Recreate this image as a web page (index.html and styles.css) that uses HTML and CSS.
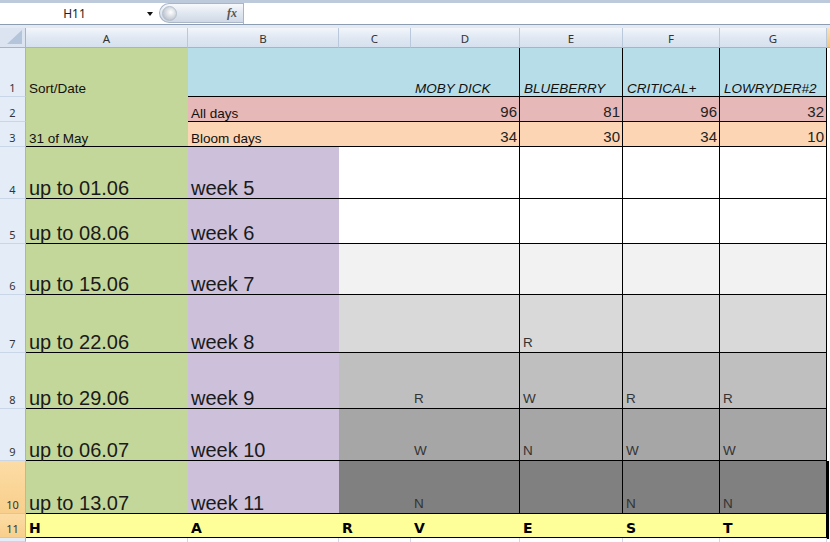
FILE: index.html
```html
<!DOCTYPE html>
<html>
<head>
<meta charset="utf-8">
<title>Harvest</title>
<link rel="stylesheet" href="styles.css">
</head>
<body>
<div class="fbar">
	<div class="namebox"><span class="ref">H11</span><i class="drop"></i></div>
	<div class="fxbox"><span class="knob"></span><em>fx</em></div>
	<div class="formula"></div>
</div>

<div class="sheet">
	<!-- column headers -->
	<div class="corner"></div>
	<div class="hd">A</div>
	<div class="hd">B</div>
	<div class="hd">C</div>
	<div class="hd">D</div>
	<div class="hd">E</div>
	<div class="hd">F</div>
	<div class="hd">G</div>
	<div class="hd sel"></div>

	<!-- 1 -->
	<div class="rh">1</div>
	<div class="c green pb2">Sort/Date</div>
	<div class="c blue bb"></div>
	<div class="c blue bb"></div>
	<div class="c blue bb br it">MOBY DICK</div>
	<div class="c blue bb br it">BLUEBERRY</div>
	<div class="c blue bb br it">CRITICAL+</div>
	<div class="c blue bb br it">LOWRYDER#2</div>
	<div class="c"></div>

	<!-- 2 -->
	<div class="rh">2</div>
	<div class="c green"></div>
	<div class="c pink bb">All days</div>
	<div class="c pink bb"></div>
	<div class="c pink bb br num">96</div>
	<div class="c pink bb br num">81</div>
	<div class="c pink bb br num">96</div>
	<div class="c pink bb br num">32</div>
	<div class="c"></div>

	<!-- 3 -->
	<div class="rh">3</div>
	<div class="c green bb">31 of May</div>
	<div class="c peach bb">Bloom days</div>
	<div class="c peach bb"></div>
	<div class="c peach bb br num">34</div>
	<div class="c peach bb br num">30</div>
	<div class="c peach bb br num">34</div>
	<div class="c peach bb br num">10</div>
	<div class="c"></div>

	<!-- 4 -->
	<div class="rh">4</div>
	<div class="c green bb big">up to 01.06</div>
	<div class="c purple bb big">week 5</div>
	<div class="c g0 bb"></div>
	<div class="c g0 bb br"></div>
	<div class="c g0 bb br"></div>
	<div class="c g0 bb br"></div>
	<div class="c g0 bb br"></div>
	<div class="c"></div>

	<!-- 5 -->
	<div class="rh">5</div>
	<div class="c green bb big">up to 08.06</div>
	<div class="c purple bb big">week 6</div>
	<div class="c g0 bb"></div>
	<div class="c g0 bb br"></div>
	<div class="c g0 bb br"></div>
	<div class="c g0 bb br"></div>
	<div class="c g0 bb br"></div>
	<div class="c"></div>

	<!-- 6 -->
	<div class="rh">6</div>
	<div class="c green bb big">up to 15.06</div>
	<div class="c purple bb big">week 7</div>
	<div class="c g1 bb"></div>
	<div class="c g1 bb br"></div>
	<div class="c g1 bb br"></div>
	<div class="c g1 bb br"></div>
	<div class="c g1 bb br"></div>
	<div class="c"></div>

	<!-- 7 -->
	<div class="rh">7</div>
	<div class="c green bb big">up to 22.06</div>
	<div class="c purple bb big">week 8</div>
	<div class="c g2 bb"></div>
	<div class="c g2 bb br"></div>
	<div class="c g2 bb br mk">R</div>
	<div class="c g2 bb br"></div>
	<div class="c g2 bb br"></div>
	<div class="c"></div>

	<!-- 8 -->
	<div class="rh">8</div>
	<div class="c green bb big">up to 29.06</div>
	<div class="c purple bb big">week 9</div>
	<div class="c g3 bb"></div>
	<div class="c g3 bb br mk">R</div>
	<div class="c g3 bb br mk">W</div>
	<div class="c g3 bb br mk">R</div>
	<div class="c g3 bb br mk">R</div>
	<div class="c"></div>

	<!-- 9 -->
	<div class="rh">9</div>
	<div class="c green bb big">up to 06.07</div>
	<div class="c purple bb big">week 10</div>
	<div class="c g4 bb"></div>
	<div class="c g4 bb br mk">W</div>
	<div class="c g4 bb br mk">N</div>
	<div class="c g4 bb br mk">W</div>
	<div class="c g4 bb br mk">W</div>
	<div class="c"></div>

	<!-- 10 -->
	<div class="rh on">10</div>
	<div class="c green bb big">up to 13.07</div>
	<div class="c purple bb big">week 11</div>
	<div class="c g5 bb"></div>
	<div class="c g5 bb br mk">N</div>
	<div class="c g5 bb br mk"></div>
	<div class="c g5 bb br mk">N</div>
	<div class="c g5 bb br mk">N</div>
	<div class="c"></div>

	<!-- 11 -->
	<div class="rh on">11</div>
	<div class="c yel bb hv">H</div>
	<div class="c yel bb hv">A</div>
	<div class="c yel bb hv">R</div>
	<div class="c yel bb hv">V</div>
	<div class="c yel bb hv">E</div>
	<div class="c yel bb hv">S</div>
	<div class="c yel bb br hv">T</div>
	<div class="c"></div>

	<!-- 12 -->
	<div class="rh"></div>
	<div class="c grid"></div>
	<div class="c grid"></div>
	<div class="c grid"></div>
	<div class="c grid"></div>
	<div class="c grid"></div>
	<div class="c grid"></div>
	<div class="c grid"></div>
	<div class="c"></div>

	<div class="selbox"></div>
</div>
</body>
</html>
```

FILE: styles.css
```css
*{margin:0; padding:0; box-sizing:border-box;}
body{width:830px; height:542px; overflow:hidden; background:#e3eaf4; font-family:"Liberation Sans", Arial, sans-serif;}

/* formula bar */
.fbar{display:flex; height:25px; border-top:3px solid #bccadc; border-bottom:1px solid #8d9db1; background:#fff; margin-bottom:3px;}
.namebox{display:flex; align-items:center; width:159px; padding-right:6px;}
.ref{flex:1; text-align:center; font-family:"Noto Sans", sans-serif; font-size:12px; color:#222; padding-left:2px;}
.drop{width:0; height:0; border-left:3px solid transparent; border-right:3px solid transparent; border-top:4px solid #111; margin-top:1px;}
.fxbox{display:flex; align-items:center; justify-content:space-between; width:84px; height:20px; margin-top:0; padding:0 6px 0 2px; border:1px solid #a9b6c7; border-right:none; border-radius:11px 0 0 11px; background:linear-gradient(#f7f9fc, #dfe6ef 55%, #cfd9e6);}
.knob{width:15px; height:15px; border-radius:50%; background:radial-gradient(circle at 60% 40%, #ffffff, #c9d0d9 60%, #a6b0bd); border:1px solid #b5bfcb;}
.fxbox em{font-family:"Liberation Serif", serif; font-size:12px; font-weight:bold; color:#555;}
.formula{flex:1; border-left:1px solid #a7b5c8;}

/* sheet */
.sheet{position:relative; display:grid; height:514px; background:#fff;
	grid-template-columns:26px 162px 151px 72px 109px 103px 97px 107px 1fr;
	grid-template-rows:20px 49px 25px 25px 52px 45px 51px 58px 56px 52px 53px 24px 1fr;}

.corner{display:flex; justify-content:flex-end; align-items:flex-end; padding:2px 3px 3px 3px; background:#dbe4f0; border-right:1px solid #9eb6ce; border-bottom:1px solid #9eb6ce;}
.corner::after{content:""; width:15px; height:14px; background:#b4c4da; clip-path:polygon(100% 0, 100% 100%, 0 100%);}
.hd{display:flex; align-items:center; justify-content:center; padding-top:1px; font-family:"Noto Sans", sans-serif; font-size:11.5px; color:#333; background:linear-gradient(#f2f6fb, #dfe7f2 55%, #d6e0ee); border-right:1px solid #b9c8da; border-bottom:1px solid #9eb6ce;}
.hd.sel{background:linear-gradient(#fbe3b6, #f6c676); border-right:none;}

.rh{display:flex; align-items:flex-end; justify-content:center; padding-bottom:3px; font-family:"Noto Sans", sans-serif; font-size:11px; line-height:1; color:#333; background:#e4ecf7; border-right:1px solid #9eb6ce; border-bottom:1px solid #c9d6e7;}
.rh.on{background:linear-gradient(#fcdca5, #f8cf8c); border-bottom-color:#f0c27a; border-right-color:#e6b15e;}

.c{display:flex; align-items:flex-end; padding:0 2px 1px 3px; white-space:nowrap; font-size:13.5px; line-height:1; color:#111;}
.pb2{padding-bottom:2px;}
.bb{border-bottom:1px solid #000;}
.br{border-right:1px solid #000;}

.green{background:#c4d79b;}
.blue{background:#b7dee8;}
.pink{background:#e6b8b7;}
.peach{background:#fcd5b4;}
.purple{background:#ccc0da;}
.g0{background:#fff;}
.g1{background:#f2f2f2;}
.g2{background:#d9d9d9;}
.g3{background:#bfbfbf;}
.g4{background:#a6a6a6;}
.g5{background:#808080;}
.yel{background:#ffff99;}
.grid{border-right:1px solid #d0d7e5;}

.it{font-style:italic; padding-left:4px;}
.num{justify-content:flex-end; font-size:15px; padding-bottom:2px; color:#222;}
.big{font-size:20px; padding-bottom:0; color:#1a1a1a;}
.mk{padding-bottom:3px; color:#333;}
.hv{font-family:"DejaVu Sans", sans-serif; font-weight:bold; font-size:14px; padding-bottom:2px; color:#000;}

/* selected cell edge */
.selbox{position:absolute; left:827px; top:433px; width:3px; height:78px; border-left:2px solid #000;}
```
